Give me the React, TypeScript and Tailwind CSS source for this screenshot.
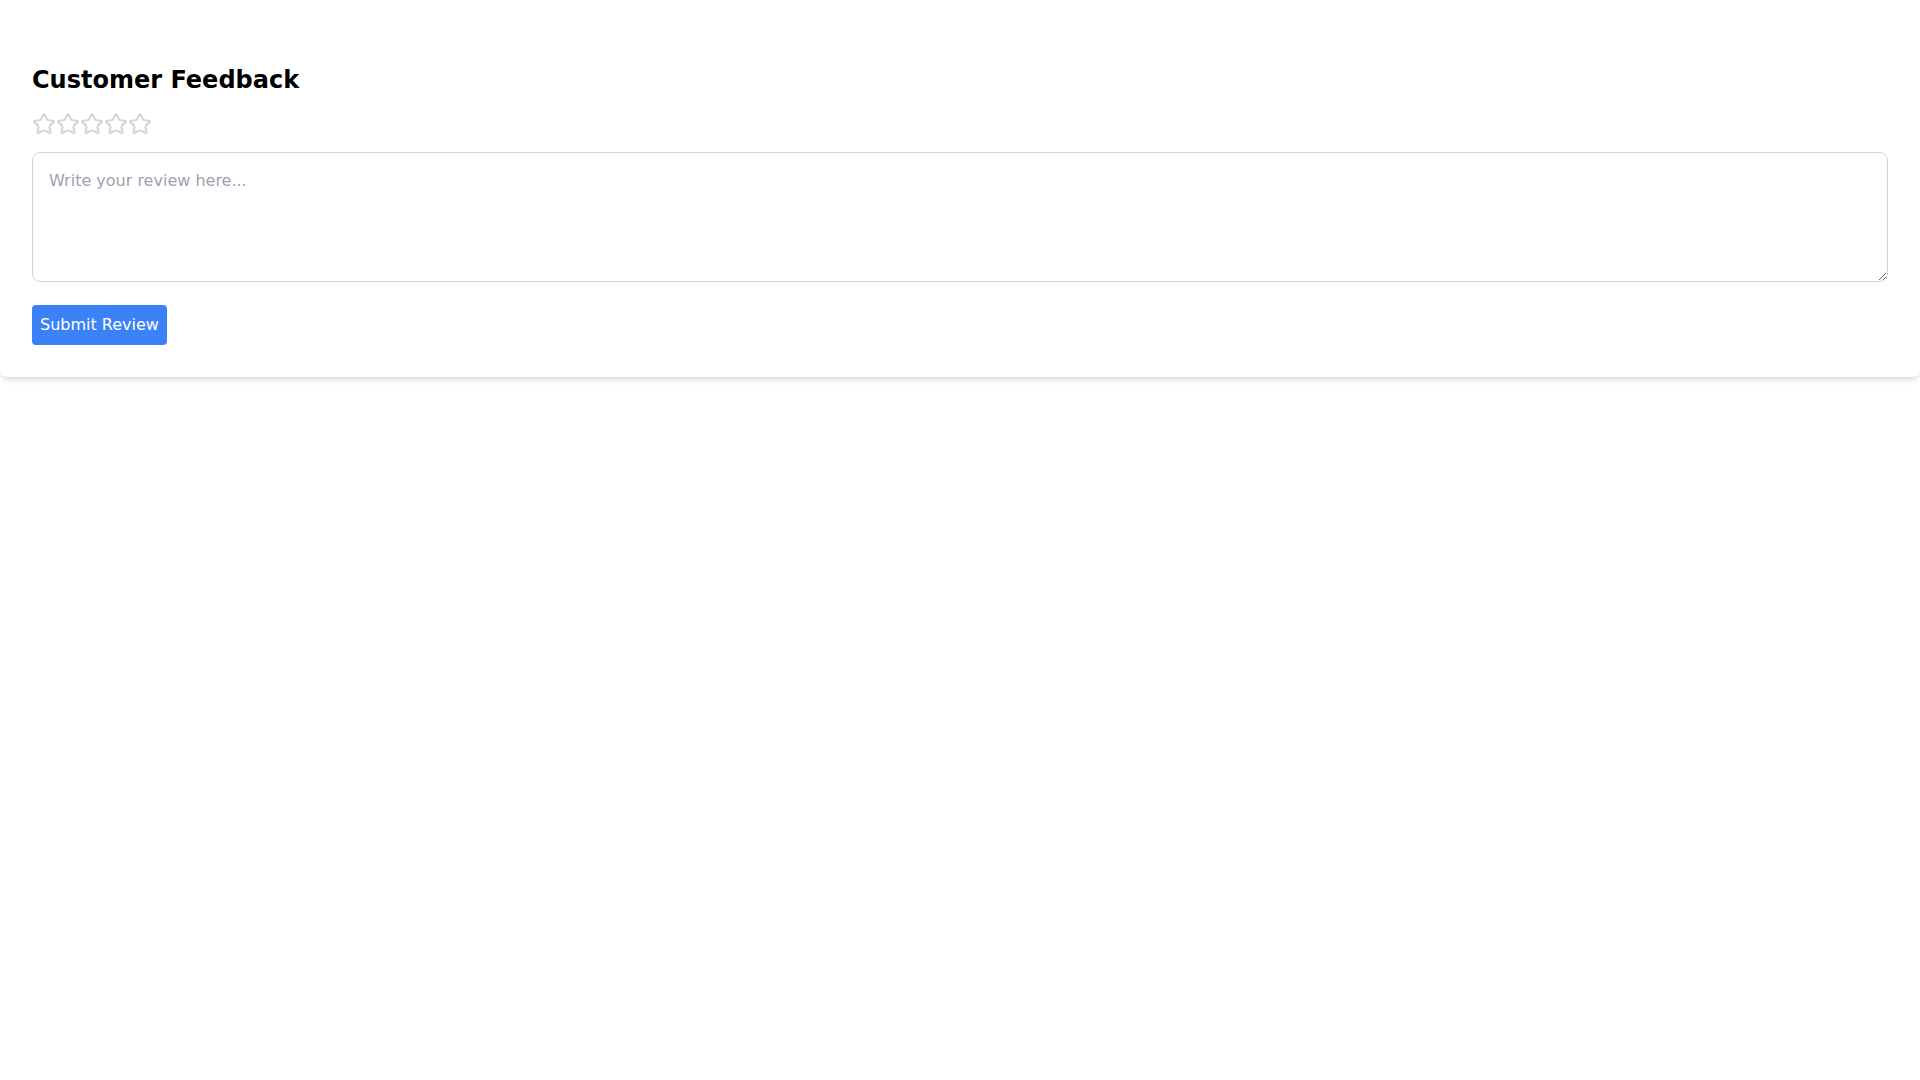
import React from "react";
import { Star } from "lucide-react";

export default function App() {
  return (
    <div className="min-h-screen bg-white pt-8 font-['DejaVu_Sans',sans-serif]">
      <div className="bg-white rounded-lg shadow-md p-8">
        <h2 className="text-2xl font-bold mb-4 text-black">Customer Feedback</h2>
        <div className="flex mb-4">
          {[0, 1, 2, 3, 4].map((i) => (
            <Star key={i} size={24} strokeWidth={2} className="text-[#d1d5db]" />
          ))}
        </div>
        <textarea
          rows={4}
          placeholder="Write your review here..."
          className="block w-full border border-[#d1d5db] rounded-lg p-4 text-base mb-[23px] placeholder:text-[#9ca3af] outline-none"
        />
        <button className="bg-[#3b82f6] text-white px-2 py-2 rounded text-base">Submit Review</button>
      </div>
    </div>
  );
}
